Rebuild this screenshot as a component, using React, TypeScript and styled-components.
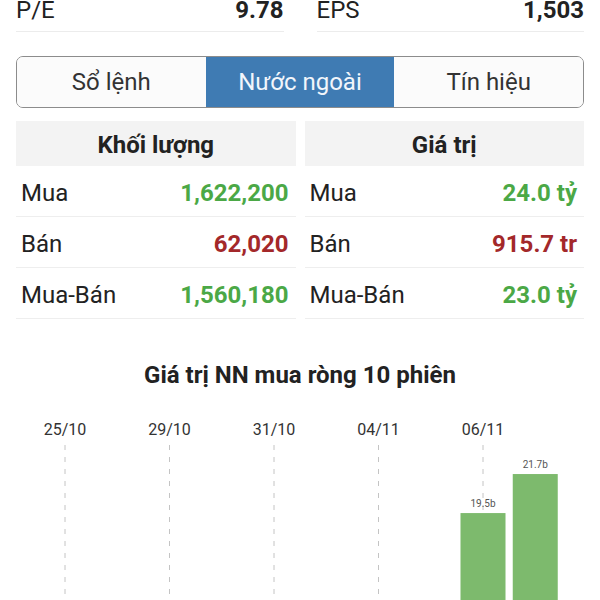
import { createGlobalStyle, styled } from "styled-components";

const GlobalStyle = createGlobalStyle`
  body {
    margin: 0;
    background: #ffffff;
    font-family: Roboto, "Liberation Sans", sans-serif;
    color: #222222;
    overflow: hidden;
  }
`;

const stats = [
  { label: "P/E", value: "9.78" },
  { label: "EPS", value: "1,503" },
];

const tabs = ["Sổ lệnh", "Nước ngoài", "Tín hiệu"];

type Tone = "up" | "down";

const tables: { title: string; rows: { label: string; value: string; tone: Tone }[] }[] = [
  {
    title: "Khối lượng",
    rows: [
      { label: "Mua", value: "1,622,200", tone: "up" },
      { label: "Bán", value: "62,020", tone: "down" },
      { label: "Mua-Bán", value: "1,560,180", tone: "up" },
    ],
  },
  {
    title: "Giá trị",
    rows: [
      { label: "Mua", value: "24.0 tỷ", tone: "up" },
      { label: "Bán", value: "915.7 tr", tone: "down" },
      { label: "Mua-Bán", value: "23.0 tỷ", tone: "up" },
    ],
  },
];

const dates = ["25/10", "29/10", "31/10", "04/11", "06/11"];

// 10 sessions, only the last two have a net-buy value
const sessions = [0, 0, 0, 0, 0, 0, 0, 0, 19.5, 21.7];

const ForeignPage = () => {
  const slot = 52.25;
  const firstX = 65;
  const baseY = 465; // zero line lies below the visible area
  const scale = 17.74;

  return (
    <Layout>
      <GlobalStyle />
      <StatsRow>
        {stats.map((s) => (
          <StatItem key={s.label}>
            <span>{s.label}</span>
            <StatValue>{s.value}</StatValue>
          </StatItem>
        ))}
      </StatsRow>

      <Tabs>
        {tabs.map((t, i) => (
          <Tab key={t} $active={i === 1}>
            {t}
          </Tab>
        ))}
      </Tabs>

      <Tables>
        {tables.map((tb) => (
          <Panel key={tb.title}>
            <PanelHeader>{tb.title}</PanelHeader>
            {tb.rows.map((r) => (
              <Row key={r.label}>
                <span>{r.label}</span>
                <RowValue $tone={r.tone}>{r.value}</RowValue>
              </Row>
            ))}
          </Panel>
        ))}
      </Tables>

      <ChartTitle>Giá trị NN mua ròng 10 phiên</ChartTitle>

      <Chart viewBox="0 0 600 206" width="600" height="206">
        {dates.map((d, i) => {
          const x = firstX + i * 2 * slot;
          return (
            <g key={d}>
              <text x={x} y={41} textAnchor="middle" fontSize="16" fill="#333">
                {d}
              </text>
              <line
                x1={x}
                x2={x}
                y1={51}
                y2={206}
                stroke="#c4c4c4"
                strokeWidth="1"
                strokeDasharray="5 7"
              />
            </g>
          );
        })}
        {sessions.map((v, i) => {
          if (!v) return null;
          const cx = firstX + i * slot;
          const h = v * scale;
          return (
            <g key={i}>
              <rect x={cx - 22.5} y={baseY - h} width={45} height={h} fill="#7dba6d" />
              <text x={cx} y={baseY - h - 6} textAnchor="middle" fontSize="10" fill="#555">
                {v.toFixed(1)}b
              </text>
            </g>
          );
        })}
      </Chart>
    </Layout>
  );
};

export default ForeignPage;

const Layout = styled.div`
  width: 600px;
  height: 600px;
  padding: 0 16px;
  box-sizing: border-box;
  overflow: hidden;
  display: flex;
  flex-direction: column;
`;

const StatsRow = styled.div`
  display: grid;
  grid-template-columns: 1fr 1fr;
  column-gap: 33px;
`;

const StatItem = styled.div`
  display: flex;
  justify-content: space-between;
  align-items: flex-start;
  height: 31px;
  border-bottom: 1px solid #ececec;
  font-size: 24px;
  line-height: 20px;
  color: #222;
`;

const StatValue = styled.span`
  font-weight: 700;
`;

const Tabs = styled.div`
  margin-top: 24px;
  display: grid;
  grid-template-columns: repeat(3, 1fr);
  height: 52px;
  border: 1px solid #8c8c8c;
  border-radius: 7px;
  overflow: hidden;
  box-sizing: border-box;
`;

const Tab = styled.div<{ $active?: boolean }>`
  display: flex;
  align-items: center;
  justify-content: center;
  font-size: 24px;
  color: ${(p) => (p.$active ? "#f2f6fb" : "#333")};
  background: ${(p) => (p.$active ? "#3f7bb3" : "#fbfbfb")};
`;

const Tables = styled.div`
  margin-top: 13px;
  display: grid;
  grid-template-columns: 1fr 1fr;
  column-gap: 9px;
`;

const Panel = styled.div`
  display: flex;
  flex-direction: column;
`;

const PanelHeader = styled.div`
  height: 45px;
  padding-top: 3px;
  box-sizing: border-box;
  background: #f3f3f3;
  display: flex;
  align-items: center;
  justify-content: center;
  font-size: 24px;
  font-weight: 700;
  color: #222;
`;

const Row = styled.div`
  height: 51px;
  padding: 4px 7px 0 5px;
  box-sizing: border-box;
  display: flex;
  align-items: center;
  justify-content: space-between;
  border-bottom: 1px solid #eeeeee;
  font-size: 24px;
  color: #222;
`;

const RowValue = styled.span<{ $tone: Tone }>`
  font-weight: 700;
  color: ${(p) => (p.$tone === "up" ? "#4ba846" : "#a3282a")};
`;

const ChartTitle = styled.div`
  margin-top: 44px;
  text-align: center;
  font-size: 24px;
  line-height: 24px;
  font-weight: 700;
  color: #222;
`;

const Chart = styled.svg`
  display: block;
  margin: 7px -16px 0;
  font-family: Roboto, "Liberation Sans", sans-serif;
  flex-shrink: 0;
`;
